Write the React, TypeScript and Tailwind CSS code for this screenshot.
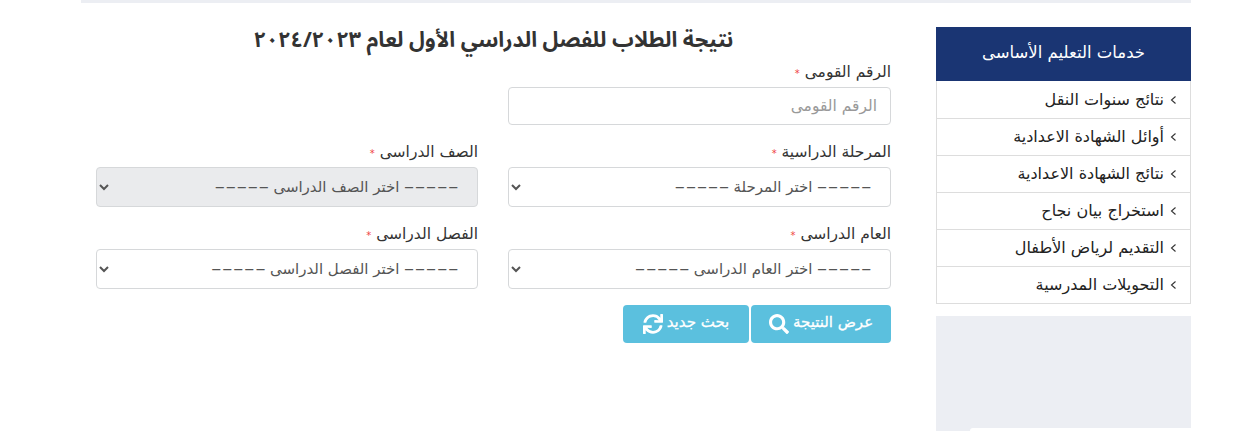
import React from "react";
import { FaSearch, FaSync } from "react-icons/fa";

const menu = [
  "نتائج سنوات النقل",
  "أوائل الشهادة الاعدادية",
  "نتائج الشهادة الاعدادية",
  "استخراج بيان نجاح",
  "التقديم لرياض الأطفال",
  "التحويلات المدرسية",
];

function Label({ text }: { text: string }) {
  return (
    <label className="block h-[27px] text-[15.5px] leading-[24px] text-[#333]">
      {text} <span className="text-[10px] text-[#ef4444]">*</span>
    </label>
  );
}

function Field({ label, option, disabled, left }: { label: string; option: string; disabled?: boolean; left?: boolean }) {
  return (
    <div className={left ? "w-[382px]" : "w-[383px]"}>
      <Label text={label} />
      <select
        disabled={disabled}
        className={`block h-[40px] w-full rounded-[4px] border border-[#d6d8da] pr-[15px] text-[15px] text-[#555] opacity-100 ${disabled ? "bg-[#eaebed]" : "bg-white"}`}
      >
        <option>{option}</option>
      </select>
    </div>
  );
}

const dash = "\u2012\u200a\u2012\u200a\u2012\u200a\u2012\u200a\u2012";

export default function App() {
  return (
    <div dir="rtl" className="h-[431px] w-full overflow-hidden bg-white font-['DejaVu_Sans',sans-serif]">
      <div className="mr-[59px] w-[1110px]">
        <div className="h-[3px] bg-[#eceef3]" />
        <div className="flex gap-[45px]">
          <aside className="mt-[24px] w-[255px] shrink-0">
            <div className="flex h-[54px] items-center justify-center bg-[#1a3573] pb-[2px] text-[16.5px] text-white">
              خدمات التعليم الأساسى
            </div>
            <ul className="border-x border-b border-[#dddddd] pt-[1px]">
              {menu.map((m) => (
                <li key={m} className="flex h-[37px] items-center gap-[6px] border-b border-[#dddddd] pr-[13px] text-[16px] text-[#222] last:h-[36px] last:border-b-0">
                  <svg width="7" height="10" viewBox="0 0 7 10" fill="none" stroke="#333" strokeWidth="1.1"><path d="M5.5 1.5 1.5 5l4 3.5" /></svg>
                  <span>{m}</span>
                </li>
              ))}
            </ul>
            <div className="relative mt-[12px] h-[115px] bg-[#eceef3]">
              <div className="absolute bottom-0 left-[34px] right-0 h-[3px] rounded-tl-[6px] bg-white" />
            </div>
          </aside>
          <main className="w-[795px]">
            <h1 className="mt-[19px] h-[36px] text-center font-['Noto_Sans_Arabic','DejaVu_Sans',sans-serif] text-[21.5px] font-bold leading-[36px] text-[#333]">
              نتيجة الطلاب للفصل الدراسي الأول لعام ٢٠٢٤/٢٠٢٣
            </h1>
            <div className="mt-[2px]">
              <Label text="الرقم القومى" />
              <input
                placeholder="الرقم القومى"
                className="block h-[38px] w-[383px] rounded-[4px] border border-[#d6d8da] pr-[13px] text-[15.5px] placeholder:text-[#999]"
              />
            </div>
            <div className="mt-[15px] flex justify-between">
              <Field label="المرحلة الدراسية" option={`${dash} اختر المرحلة ${dash}`} />
              <Field left label="الصف الدراسى" option={`${dash} اختر الصف الدراسى ${dash}`} disabled />
            </div>
            <div className="mt-[15px] flex justify-between">
              <Field label="العام الدراسى" option={`${dash} اختر العام الدراسى ${dash}`} />
              <Field left label="الفصل الدراسى" option={`${dash} اختر الفصل الدراسى ${dash}`} />
            </div>
            <div className="mt-[16px] flex gap-[2px]">
              <button className="flex h-[38px] w-[140px] items-center justify-center gap-[4px] rounded-[4px] bg-[#5bc0de] text-[15px] text-white [-webkit-text-stroke:0.3px_white]">
                <span className="pb-[3px]">عرض النتيجة</span>
                <FaSearch size={20} />
              </button>
              <button className="flex h-[38px] w-[126px] items-center justify-center gap-[4px] rounded-[4px] bg-[#5bc0de] text-[15px] text-white [-webkit-text-stroke:0.3px_white]">
                <span className="pb-[3px]">بحث جديد</span>
                <FaSync size={20} />
              </button>
            </div>
          </main>
        </div>
      </div>
    </div>
  );
}
